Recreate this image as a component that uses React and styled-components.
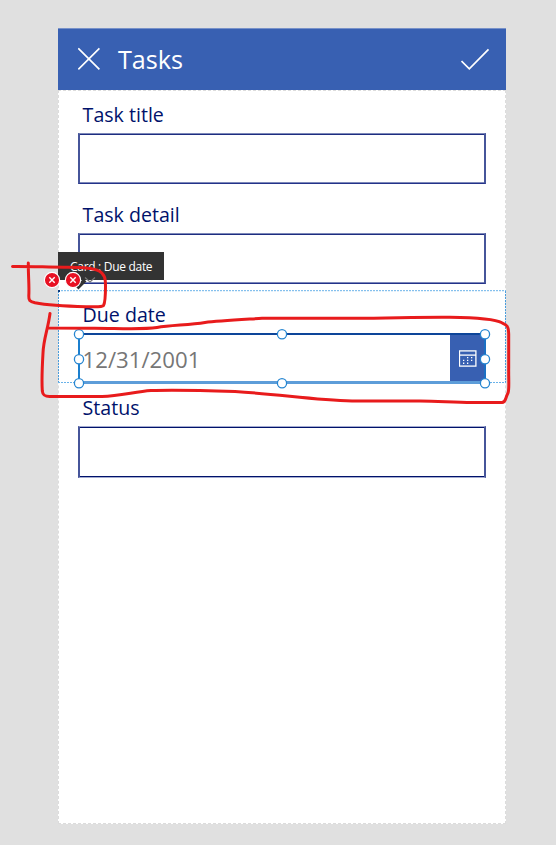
import React from "react";
import styled, { createGlobalStyle } from "styled-components";

const GlobalStyle = createGlobalStyle`
  * { box-sizing: border-box; }
  body { margin: 0; background: #e0e0e0; overflow: hidden; }
`;

const Canvas = styled.main`
  position: relative;
  width: 556px;
  height: 845px;
  padding: 28px 50px 21px 58px;
  background: #e0e0e0;
  font-family: "Open Sans", "Noto Sans", sans-serif;
`;

const Screen = styled.section`
  position: relative;
  display: flex;
  flex-direction: column;
  width: 448px;
  height: 796px;
  background: #fff;
`;

const Header = styled.header`
  display: flex;
  align-items: center;
  flex: none;
  height: 62px;
  padding: 0 16px 2px 20px;
  background: #3860b2;
  border-top: 1px solid #7791c9;
`;

const HeaderIcon = styled.svg`
  flex: none;
  fill: none;
  stroke: #fff;
  stroke-width: 1.7;
`;

const Title = styled.h1`
  flex: 1;
  margin: 1px 0 0 17px;
  color: #fff;
  font-size: 25.2px;
  font-weight: 400;
  line-height: 36px;
`;

const Form = styled.form`
  flex: 1;
  border: 1px dashed #dcdcdc;
  margin: 0;
`;

const Card = styled.div`
  height: ${(p) => p.$height}px;
  padding: 8px 19px 0;
`;

const Label = styled.label`
  display: block;
  height: 32px;
  padding-left: 4.6px;
  color: #00126b;
  font-size: 19.6px;
  line-height: 32px;
  white-space: nowrap;
`;

const Field = styled.div`
  height: ${(p) => (p.$crisp ? 52 : 51)}px;
  margin-top: 2px;
  border: solid #46559a;
  border-width: 1px 2px;
  border-top-color: ${(p) => (p.$crisp ? "#a5acd0" : "#7d88b9")};
  border-bottom-color: ${(p) => (p.$crisp ? "#a5acd0" : "#23328a")};
  box-shadow:
    inset 0 1px ${(p) => (p.$crisp ? "#00126b" : "#1e2d80")},
    inset 0 -1px ${(p) => (p.$crisp ? "#00126b" : "#7d88b9")};
`;

const DateField = styled.div`
  display: flex;
  align-items: center;
  justify-content: space-between;
  height: 51px;
  margin-top: 2px;
  padding-left: 2.6px;
  border: 2px solid #1b7fce;
  border-top-color: #0d4599;
  border-bottom: 3px solid #5d9dd9;
  border-right: 0;
`;

const DateValue = styled.span`
  color: #767676;
  font-size: 22.2px;
  line-height: 34px;
  padding-top: 4px;
`;

const CalendarButton = styled.span`
  display: flex;
  align-items: center;
  justify-content: center;
  width: 36px;
  height: 100%;
  padding-right: 1px;
  background: #3860b2;
`;

const Tooltip = styled.div`
  position: absolute;
  left: 58px;
  top: 252px;
  width: 106px;
  height: 28px;
  padding-left: 12px;
  background: #333;
  color: #fff;
  font-size: 12px;
  letter-spacing: -0.3px;
  line-height: 29px;
  white-space: nowrap;
`;

const Overlay = styled.svg`
  position: absolute;
  left: 0;
  top: 0;
  pointer-events: none;
`;

const handles = [
  [79, 334], [282, 334], [485, 334],
  [79, 359], [485, 359],
  [79, 383], [282, 383], [485, 383],
];

function CalendarIcon() {
  return (
    <svg width="18" height="17" viewBox="0 0 18 17" fill="none" stroke="#fff" strokeWidth="1.3">
      <rect x="0.5" y="0.9" width="16.4" height="15.2" />
      <path d="M1 5.1H17" />
      <path
        d="M8 7.6h1.3M12 7.6h1.3M4 10.4h1.3M8 10.4h1.3M12 10.4h1.3M4 13.2h1.3M8 13.2h1.3"
        strokeWidth="1.4"
      />
    </svg>
  );
}

function ErrorBadge({ x }) {
  return (
    <g>
      <circle cx={x} cy="280" r="7.6" fill="#e81123" stroke="#fff" strokeWidth="1.1" />
      <path d={`M${x - 2.7} 277.3l5.4 5.4m0-5.4l-5.4 5.4`} stroke="#fff" strokeWidth="1.4" />
    </g>
  );
}

export default function App() {
  return (
    <>
      <GlobalStyle />
      <Canvas>
        <Screen>
          <Header>
            <HeaderIcon width="23" height="24" viewBox="0 0 23 24">
              <path d="M.3 1.3 21.4 22.4M21.4 1.3.3 22.4" />
            </HeaderIcon>
            <Title>Tasks</Title>
            <HeaderIcon width="29" height="22" viewBox="0 0 29 22">
              <path d="M.5 13 8.3 20.8 27.5 1.4" />
            </HeaderIcon>
          </Header>
          <Form>
            <Card $height={100}>
              <Label>Task title</Label>
              <Field />
            </Card>
            <Card $height={100}>
              <Label>Task detail</Label>
              <Field />
            </Card>
            <Card $height={93}>
              <Label>Due date</Label>
              <DateField>
                <DateValue>12/31/2001</DateValue>
                <CalendarButton><CalendarIcon /></CalendarButton>
              </DateField>
            </Card>
            <Card $height={100}>
              <Label>Status</Label>
              <Field $crisp />
            </Card>
          </Form>
        </Screen>
        <Tooltip>Card : Due date</Tooltip>
        <Overlay width="556" height="845" viewBox="0 0 556 845" fill="none">
          <path d="M58.5 291V383M505.5 291V383" stroke="#4b9ddc" strokeDasharray="2 1" />
          <path d="M58 290.7H506M58 382.5H78M487 382.5H506" stroke="#69b2e9" strokeDasharray="2 1" />
          <path d="M58 290h2v2h-2z" fill="#0a397d" />
          <path d="M77 288 85 280" stroke="#333" strokeWidth="4" />
          <path d="M85 277.5 90 282 95 277.5" stroke="#777" strokeWidth="1.2" />
          <path d="M485 334V383" stroke="#1b70c4" strokeWidth="2" />
          {handles.map(([x, y]) => (
            <circle key={`${x}-${y}`} cx={x} cy={y + 0.3} r="4.6" fill="#fff" stroke="#2686d1" strokeWidth="1.3" />
          ))}
          <ErrorBadge x={52} />
          <ErrorBadge x={73} />
          <g stroke="#e81b1c" strokeWidth="3" strokeLinecap="round" strokeLinejoin="round">
            <path d="M12.5 266.5C34 266.3 48 267.3 66 267.2C81 267.1 93 267.6 99 271C105 274 105.5 279 105.5 286C105.5 293 105 303 103.5 305.5C102 307.5 94 306.8 86 306.7C66 306.3 44 304.6 35 302.8C29.5 301.5 28.6 300 28.8 296C29.4 285 28.2 277 28.3 263" />
            <path d="M50 313.5C48 329 43.5 339 43 353C42 370 41.7 382 42.3 391C42.8 395.5 45 396.5 50 396.4H102C120 396.3 135 391.5 151 390.5C172 389.6 206 390.5 235 391.6C278 394 313 400 352 401.1H415C434 400.6 453 402.7 473 402.6H502C506 402.4 505 398.5 508 393C509.5 389 508.5 381 508.7 368V334C508.5 326 507 325 502 322.8C494 318.5 471 317.6 450 317.3C414 317 389 318.4 350 318.3H262C249 319.2 219 320.8 205 322.5C189 325 171 325.2 157 327.5C140 330 112 327.9 91 328.2L49 328.1" />
          </g>
        </Overlay>
      </Canvas>
    </>
  );
}
